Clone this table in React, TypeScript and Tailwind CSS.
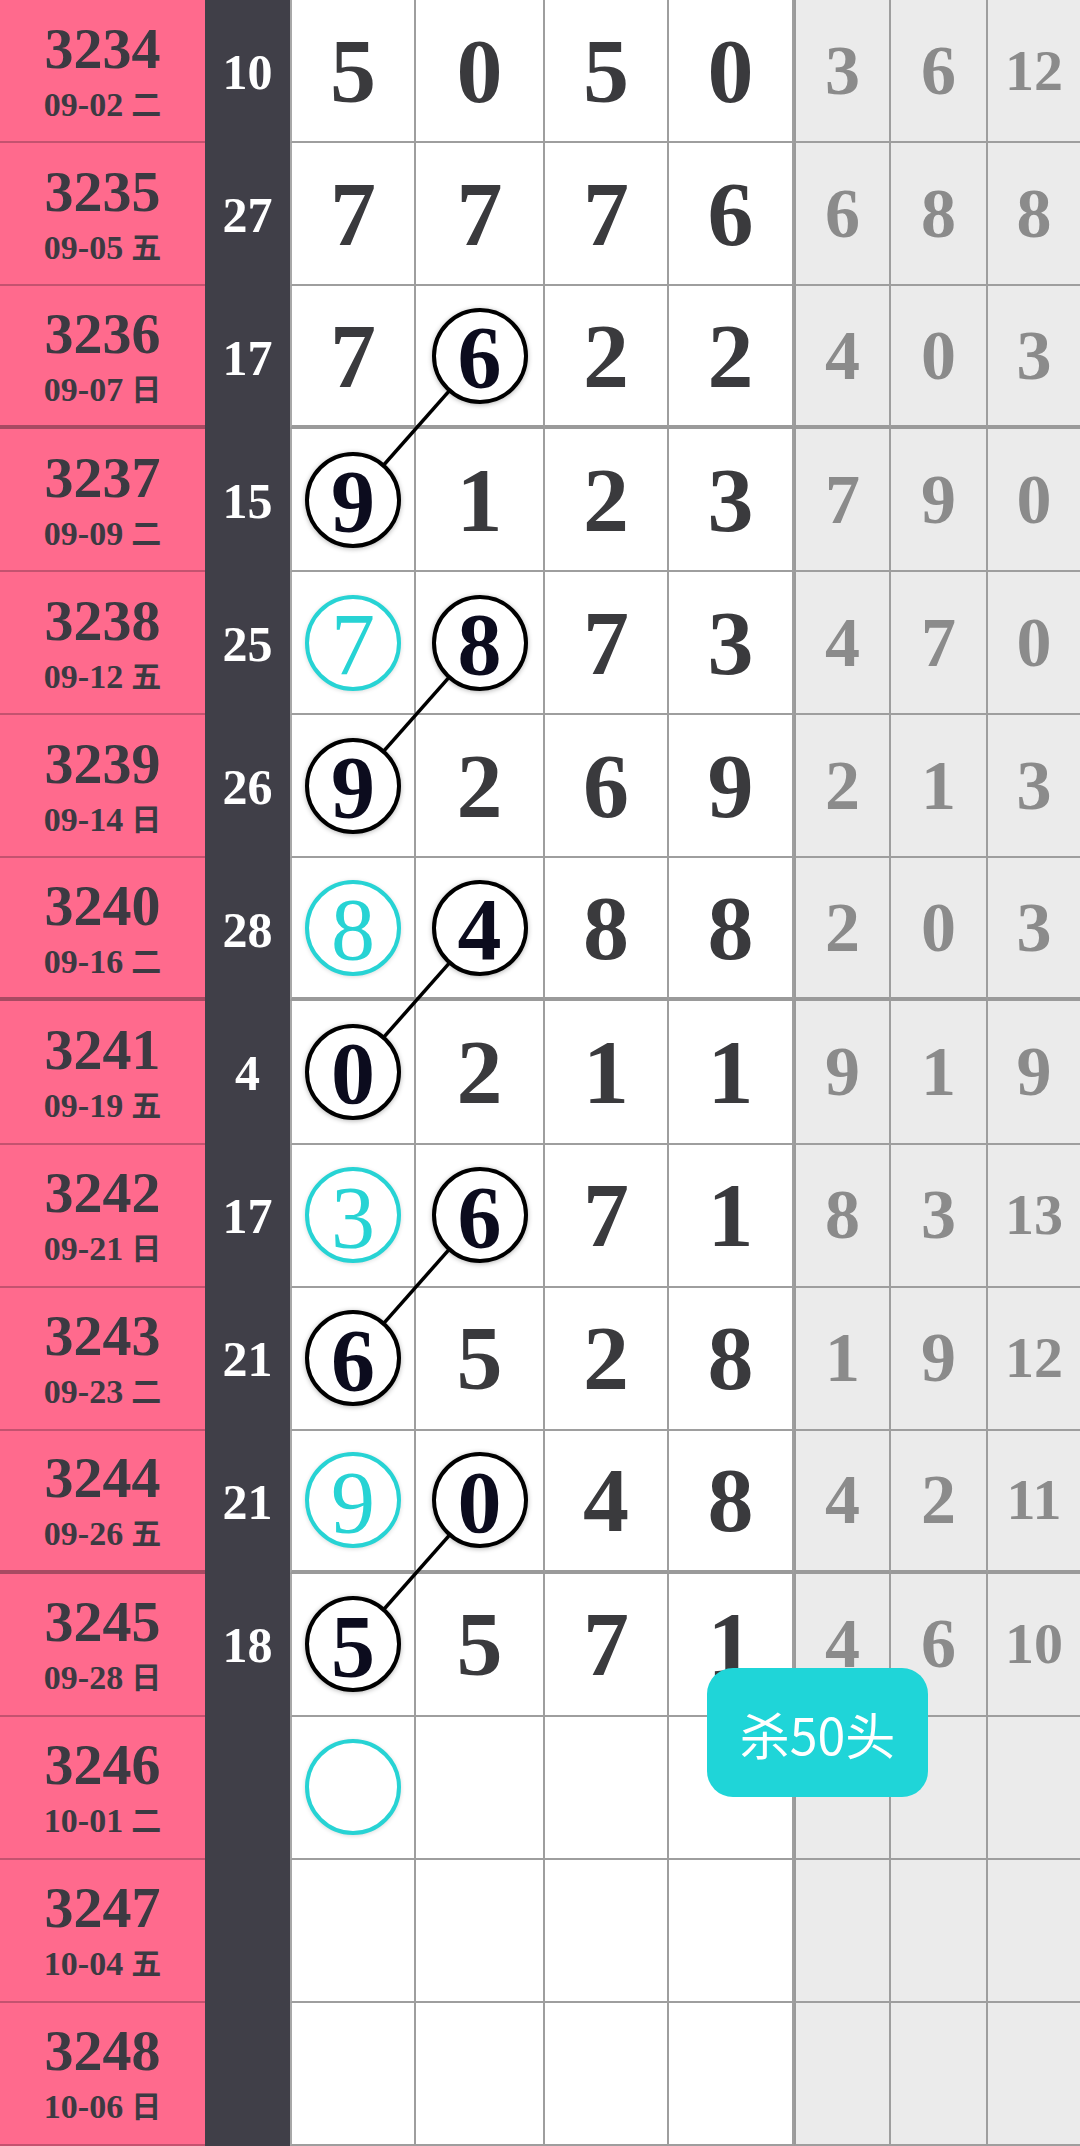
import React from "react";

type Mark = "black" | "teal" | "tealEmpty" | null;
type Row = {
  id: string;
  date: string;
  wd: string;
  sum: string;
  n: (number | null)[];
  g: (number | null)[];
  m1?: Mark;
  m2?: Mark;
};

const rows: Row[] = [
  { id: "3234", date: "09-02", wd: "二", sum: "10", n: [5, 0, 5, 0], g: [3, 6, 12] },
  { id: "3235", date: "09-05", wd: "五", sum: "27", n: [7, 7, 7, 6], g: [6, 8, 8] },
  { id: "3236", date: "09-07", wd: "日", sum: "17", n: [7, 6, 2, 2], g: [4, 0, 3], m2: "black" },
  { id: "3237", date: "09-09", wd: "二", sum: "15", n: [9, 1, 2, 3], g: [7, 9, 0], m1: "black" },
  { id: "3238", date: "09-12", wd: "五", sum: "25", n: [7, 8, 7, 3], g: [4, 7, 0], m1: "teal", m2: "black" },
  { id: "3239", date: "09-14", wd: "日", sum: "26", n: [9, 2, 6, 9], g: [2, 1, 3], m1: "black" },
  { id: "3240", date: "09-16", wd: "二", sum: "28", n: [8, 4, 8, 8], g: [2, 0, 3], m1: "teal", m2: "black" },
  { id: "3241", date: "09-19", wd: "五", sum: "4", n: [0, 2, 1, 1], g: [9, 1, 9], m1: "black" },
  { id: "3242", date: "09-21", wd: "日", sum: "17", n: [3, 6, 7, 1], g: [8, 3, 13], m1: "teal", m2: "black" },
  { id: "3243", date: "09-23", wd: "二", sum: "21", n: [6, 5, 2, 8], g: [1, 9, 12], m1: "black" },
  { id: "3244", date: "09-26", wd: "五", sum: "21", n: [9, 0, 4, 8], g: [4, 2, 11], m1: "teal", m2: "black" },
  { id: "3245", date: "09-28", wd: "日", sum: "18", n: [5, 5, 7, 1], g: [4, 6, 10], m1: "black" },
  { id: "3246", date: "10-01", wd: "二", sum: "", n: [null, null, null, null], g: [null, null, null], m1: "tealEmpty" },
  { id: "3247", date: "10-04", wd: "五", sum: "", n: [null, null, null, null], g: [null, null, null] },
  { id: "3248", date: "10-06", wd: "日", sum: "", n: [null, null, null, null], g: [null, null, null] },
];

const ROW_H = 2146 / 15;
const thick = new Set([2, 6, 10]);
const links = [2, 4, 6, 8, 10];
const rowCenter = (i: number) => i * ROW_H + (ROW_H - 2) / 2;

const serif = "font-['Liberation_Serif','Noto_Sans_CJK_SC',serif]";

function Circle({ v, kind }: { v: number | null; kind: Mark }) {
  if (kind === "black") {
    return (
      <div className="relative z-10 flex h-[96px] w-[96px] items-center justify-center rounded-full border-[4px] border-black bg-white shadow-[0_1px_5px_rgba(0,0,0,0.3)]">
        <span className="pt-[5px] text-[88px] font-bold leading-none text-[#0c0c1e]">{v}</span>
      </div>
    );
  }
  return (
    <div className="relative z-10 flex h-[96px] w-[96px] items-center justify-center rounded-full border-[4px] border-[#27d3d4] bg-white shadow-[0_1px_4px_rgba(0,0,0,0.15)]">
      {kind === "teal" && (
        <span className="pt-[5px] text-[88px] font-normal leading-none text-[#27d3d4]">{v}</span>
      )}
    </div>
  );
}

export default function App() {
  return (
    <div className={`relative h-[2146px] w-[1080px] overflow-hidden bg-white ${serif}`}>
      <div className="grid h-full w-full grid-cols-[205px_85px_126px_129px_124px_125px_97px_97px_92px] grid-rows-[repeat(15,minmax(0,1fr))]">
        {rows.map((r, i) => {
          const tb = thick.has(i);
          const wb = tb ? "border-b-[4px] border-b-[#9a9a9a]" : "border-b-2 border-b-[#9e9e9e]";
          return (
            <React.Fragment key={r.id}>
              <div
                className={`flex flex-col items-center justify-center bg-[#ff6a8d] text-[#3c3a42] ${
                  tb ? "border-b-[4px] border-b-[#a84a62]" : "border-b-2 border-b-[#c4526f]"
                }`}
              >
                <div className="text-[58px] font-bold leading-none">{r.id}</div>
                <div className="mt-[10px] flex items-center text-[34px] font-bold leading-none">
                  <span>{r.date}</span>
                  <span className="ml-[8px] text-[30px] font-bold">{r.wd}</span>
                </div>
              </div>
              <div className="flex items-center justify-center bg-[#403f48] text-[50px] font-bold leading-none text-white">
                {r.sum}
              </div>
              {r.n.map((v, j) => {
                const mark = j === 0 ? r.m1 : j === 1 ? r.m2 : null;
                return (
                  <div
                    key={j}
                    className={`flex items-center justify-center border-r-2 border-r-[#9e9e9e] ${wb} ${
                      j === 0 ? "border-l-2 border-l-[#a8a8a8]" : ""
                    }`}
                  >
                    {mark ? (
                      <Circle v={v} kind={mark} />
                    ) : v !== null ? (
                      <span className="text-[92px] font-bold leading-none text-[#3a3a3d]">{v}</span>
                    ) : null}
                  </div>
                );
              })}
              {r.g.map((v, j) => (
                <div
                  key={"g" + j}
                  className={`flex items-center justify-center bg-[#ebebeb] ${wb} ${
                    j === 0 ? "border-l-2 border-l-[#9a9a9a] border-r-2 border-r-[#9e9e9e]" : j === 1 ? "border-r-2 border-r-[#9e9e9e]" : ""
                  }`}
                >
                  {v !== null && (
                    <span
                      className={`font-bold leading-none text-[#8b8b8b] ${
                        v >= 10 ? "text-[58px]" : "text-[70px]"
                      }`}
                    >
                      {v}
                    </span>
                  )}
                </div>
              ))}
            </React.Fragment>
          );
        })}
      </div>

      <svg
        className="pointer-events-none absolute left-0 top-0"
        width={1080}
        height={2146}
        viewBox="0 0 1080 2146"
      >
        {links.map((i) => (
          <line
            key={i}
            x1={479.5}
            y1={rowCenter(i)}
            x2={353}
            y2={rowCenter(i + 1)}
            stroke="#000"
            strokeWidth={3.5}
          />
        ))}
      </svg>

      <div className="absolute left-[707px] top-[1668px] z-20 flex h-[129px] w-[221px] items-center justify-center rounded-[26px] bg-[#1fd5d8] font-['Noto_Sans_CJK_SC',sans-serif] text-[50px] font-normal leading-none text-white">
        杀50头
      </div>
    </div>
  );
}
